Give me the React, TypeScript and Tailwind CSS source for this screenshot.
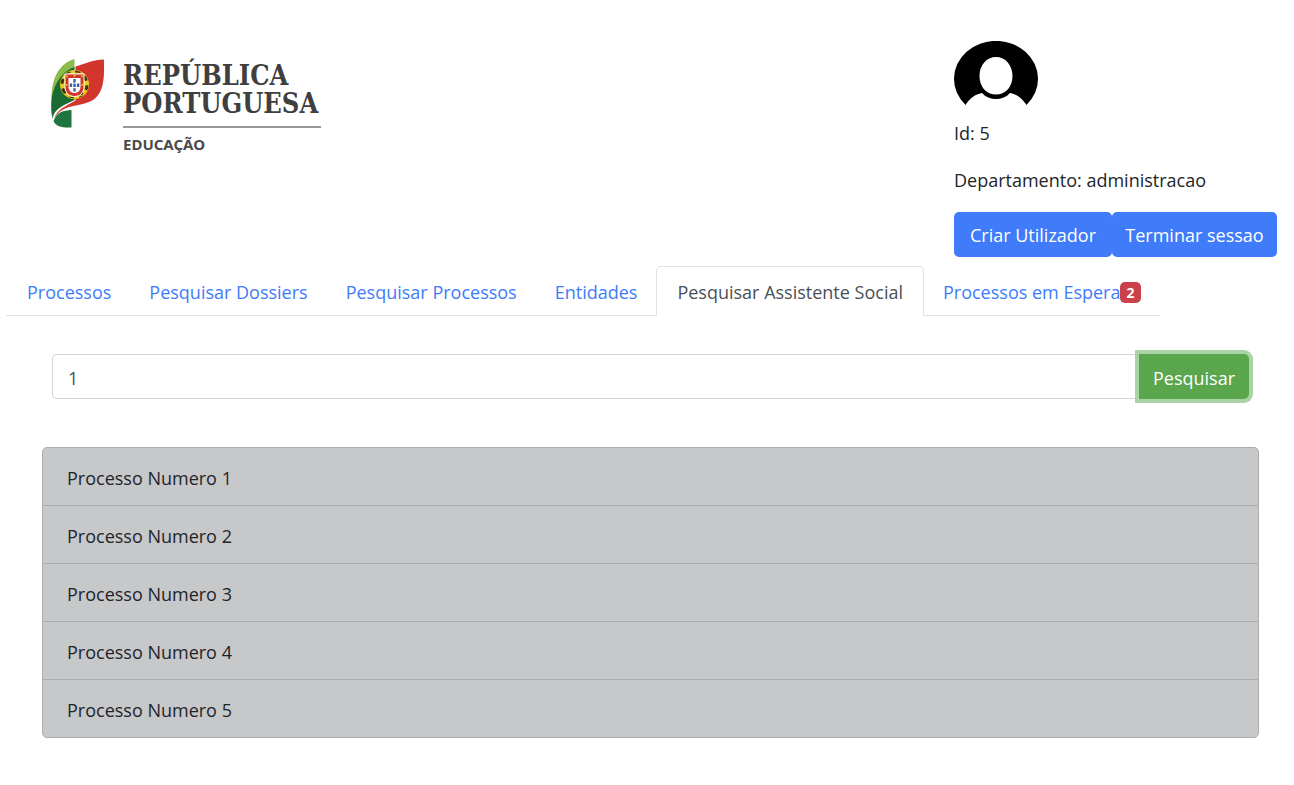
const tabs = [
  { label: "Processos" },
  { label: "Pesquisar Dossiers" },
  { label: "Pesquisar Processos" },
  { label: "Entidades" },
  { label: "Pesquisar Assistente Social", active: true },
  { label: "Processos em Espera", badge: 2 },
];

const processos = [1, 2, 3, 4, 5];

function Emblem() {
  return (
    <svg viewBox="0 0 54 70" className="h-[70px] w-[54px] shrink-0" aria-hidden="true">
      <path d="M23.500 1C12 4 4 14 1.500 28C0 36 0 48 0.500 56L3 40L23.500 10Z" fill="#8dbb4b" />
      <path d="M23.500 9C12 13 4 24 1 38C0 46 0 54 1.500 61C3 50 14 47 23.500 42Z" fill="#1c6b35" />
      <path d="M24.500 8.500C34 6 42 1.500 53 1.500C53 12 54 24 49 34C43 45 34 45 25 47.500C15 49 7 53 3 61C6 51 15 48 24.500 42.500Z" fill="#d2352c" />
      <path d="M2.500 63C6 54 12 52.500 20.500 52V69.500C12 70 5 69 2.500 63Z" fill="#1f7540" />
      <circle cx="23.500" cy="26.500" r="14.500" fill="#e9cb25" />
      <circle cx="23.500" cy="26.500" r="12.500" fill="none" stroke="#3f3213" strokeWidth="3" strokeDasharray="5.500 4.300" />
      <path d="M9 26.500H38M23.500 12V41M13 17.500C20 14 27 14 34 17.500M13 36C20 39.500 27 39.500 34 36" fill="none" stroke="#e9cb25" strokeWidth="1.300" />
      <path d="M14 16H33V28.500C33 35 28.500 38.500 23.500 38.500C18.500 38.500 14 35 14 28.500Z" fill="#d2352c" stroke="#fff" strokeWidth="1" />
      <path d="M17.500 20H29.500V28.500C29.500 33 26.500 35 23.500 35C20.500 35 17.500 33 17.500 28.500Z" fill="#fff" />
      <path d="M22.300 21h2.400v3.400h-2.400zM22.300 25.600h2.400v3.400h-2.400zM22.300 30.200h2.400v3.400h-2.400zM18.700 25.600h2.400v3.400h-2.400zM25.900 25.600h2.400v3.400h-2.400z" fill="#3c62a8" />
      <path d="M15.200 17.500h1.600v1.800h-1.600zM22.700 17h1.600v1.800h-1.600zM30.200 17.500h1.600v1.800h-1.600zM15 26h1.500v1.800h-1.500zM30.500 26h1.500v1.800h-1.500z" fill="#e9cb25" />
    </svg>
  );
}

function Logo() {
  return (
    <div className="flex gap-[18px] text-[#3f3f3f]">
      <Emblem />
      <div className="min-w-[198px] pt-1">
        <div className="font-['DejaVu_Serif_Condensed','DejaVu_Serif',serif] text-[27px] leading-[28px] font-bold">
          <div>REPÚBLICA</div>
          <div>PORTUGUESA</div>
        </div>
        <div className="mt-2 border-t-2 border-[#9a9a9a] pt-[6px] font-['Noto_Sans','Open_Sans',sans-serif] text-[15px] leading-5 font-bold text-[#4a4a4a]">
          EDUCAÇÃO
        </div>
      </div>
    </div>
  );
}

function Avatar() {
  return (
    <svg viewBox="0 0 84 64" className="h-16 w-[84px]" role="img" aria-label="Utilizador">
      <path
        fillRule="evenodd"
        fill="#000"
        d="M11.500 64A42 38 0 1 1 72.500 64C68 57 63 53.500 56 52C49 60 35 60 28 52C21 53.500 16 57 11.500 64ZM42 16C32.500 16 25.500 24 25.500 35C25.500 46 32.500 53.500 42 53.500C51.500 53.500 58.500 46 58.500 35C58.500 24 51.500 16 42 16Z"
      />
    </svg>
  );
}

export default function App() {
  return (
    <div className="bg-white font-['Open_Sans','Noto_Sans',sans-serif] text-[18px] leading-[28px] text-[#212529]">
      <header className="flex items-start justify-between pr-[17px] pl-[51px]">
        <div className="pt-[58px]">
          <Logo />
        </div>
        <div className="pt-[41px]">
          <Avatar />
          <p className="mt-[14px]">Id: 5</p>
          <p className="mt-[19px]">Departamento: administracao</p>
          <div className="mt-[18px] flex text-white">
            <button type="button" className="h-[45px] min-w-[158px] rounded-[5px] bg-[#407bfa] px-3">Criar Utilizador</button>
            <button type="button" className="h-[45px] min-w-[165px] rounded-[5px] bg-[#407bfa] px-3">Terminar sessao</button>
          </div>
        </div>
      </header>

      <nav className="mt-[9px] ml-[6px] flex w-fit border-b border-[#dee2e6] pl-[2px] whitespace-nowrap">
        {tabs.map((tab) => (
          <a
            key={tab.label}
            href="#"
            aria-current={tab.active ? "page" : undefined}
            className={
              tab.active
                ? "-mb-px flex h-[50px] items-center rounded-t-[5px] border border-b-0 border-[#dee2e6] bg-white px-[20px] pt-px text-[#495057]"
                : "flex h-[49px] items-center border-x border-transparent px-[18px] pt-[3px] text-[#407bfa]"
            }
          >
            {tab.label}
            {tab.badge && (
              <span className="rounded-[5px] bg-[#c9414a] px-[6px] text-[14px] leading-[21px] font-bold text-white">{tab.badge}</span>
            )}
          </a>
        ))}
      </nav>

      <main className="pt-[38px] pr-[35px] pb-[47px] pl-[42px]">
        <form className="mx-[10px] flex" onSubmit={(e) => e.preventDefault()}>
          <input
            type="text"
            aria-label="Pesquisar assistente social"
            defaultValue="1"
            className="h-[45px] min-w-0 flex-1 rounded-l-[5px] border border-r-0 border-[#ced4da] px-[15px] pt-[2px] text-[#495057] outline-none"
          />
          <button type="submit" className="h-[45px] min-w-[110px] rounded-r-[5px] bg-[#5aa64d] px-3 pt-[2px] text-white ring-4 ring-[#abd4a6]">
            Pesquisar
          </button>
        </form>

        <ul className="mt-12 divide-y divide-[#abadaf] overflow-hidden rounded-[5px] border border-[#abadaf] bg-[#c7c8ca]">
          {processos.map((n) => (
            <li key={n} className="px-[24px] pt-[16px] pb-[13px]">
              Processo Numero {n}
            </li>
          ))}
        </ul>
      </main>
    </div>
  );
}
